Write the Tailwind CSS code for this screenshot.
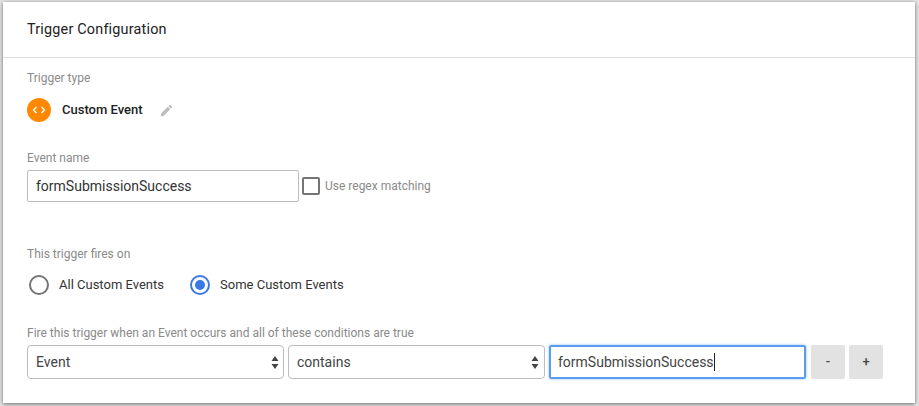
<!DOCTYPE html>
<html lang="en">
<head>
  <meta charset="UTF-8">
  <title>Trigger Configuration</title>
  <script src="https://cdn.jsdelivr.net/npm/@tailwindcss/browser@4"></script>
</head>
<body class="w-[919px] h-[406px] overflow-hidden bg-[#e4e4e4] font-['Roboto',sans-serif] text-[#212121]">
  <div class="ml-[3px] mt-[2px] w-[912px] h-[401px] bg-white shadow-[0_1px_4px_rgba(0,0,0,0.55)]">
    <header class="h-[56px] flex items-center pl-6 border-b border-[#dcdcdc] text-[14.4px] tracking-[0.2px]">Trigger Configuration</header>

    <div class="pl-6 pt-[13px]">
      <div class="text-[12px] leading-[14px] text-[#8a8a8a]">Trigger type</div>

      <!-- selected type -->
      <div class="flex items-center mt-[13px] h-6">
        <span class="w-6 h-6 rounded-full bg-[#ff8800] flex items-center justify-center">
          <svg width="14" height="10" viewBox="0 0 14 10" fill="none" stroke="white" stroke-width="1.4"><path d="M4.5 2 1.5 5l3 3M9.5 2l3 3-3 3"/></svg>
        </span>
        <span class="ml-[11px] text-[13px] font-medium">Custom Event</span>
        <svg class="ml-[16px]" width="15" height="15" viewBox="0 0 24 24" fill="#bdbdbd"><path d="M3 17.25V21h3.75L17.81 9.94l-3.75-3.75L3 17.25zM20.71 7.04a1 1 0 0 0 0-1.41l-2.34-2.34a1 1 0 0 0-1.41 0l-1.83 1.83 3.75 3.75 1.83-1.83z"/></svg>
      </div>

      <div class="text-[12px] leading-[14px] text-[#8a8a8a] mt-[29px]">Event name</div>
      <div class="flex items-center mt-[5px]">
        <div class="w-[272px] h-8 border border-[#bdbdbd] rounded-[2px] flex items-center pl-2 text-[14px] text-[#333]">formSubmissionSuccess</div>
        <span class="ml-[3px] w-[18px] h-[18px] border-2 border-[#757575] rounded-[2px]"></span>
        <span class="ml-[5px] text-[12px] text-[#8a8a8a]">Use regex matching</span>
      </div>

      <div class="text-[12px] leading-[14px] text-[#8a8a8a] mt-[45px]">This trigger fires on</div>

      <!-- radios -->
      <div class="flex items-center mt-[14px] h-5 text-[13px] text-[#333]">
        <span class="ml-[2px] w-5 h-5 rounded-full border-2 border-[#757575]"></span>
        <span class="ml-[10px]">All Custom Events</span>
        <span class="ml-[26px] w-5 h-5 rounded-full border-2 border-[#3b78e7] flex items-center justify-center"><span class="w-[10px] h-[10px] rounded-full bg-[#3b78e7]"></span></span>
        <span class="ml-[10px]">Some Custom Events</span>
      </div>

      <div class="text-[12px] leading-[14px] text-[#8a8a8a] mt-[31px]">Fire this trigger when an Event occurs and all of these conditions are true</div>

      <!-- condition row -->
      <div class="flex items-center mt-[5px] text-[14px] text-[#444]">
        <div class="w-[257px] h-[34px] border border-[#bdbdbd] rounded-[4px] flex items-center justify-between pl-2 pr-[4px]">
          <span>Event</span>
          <svg width="8" height="13" viewBox="0 0 8 13" fill="#444"><path d="M4 0 7.5 5H.5zM4 13 .5 8h7z"/></svg>
        </div>
        <div class="ml-1 w-[257px] h-[34px] border border-[#bdbdbd] rounded-[4px] flex items-center justify-between pl-2 pr-[5px]">
          <span>contains</span>
          <svg width="8" height="13" viewBox="0 0 8 13" fill="#444"><path d="M4 0 7.5 5H.5zM4 13 .5 8h7z"/></svg>
        </div>
        <div class="ml-1 w-[257px] h-[34px] border-2 border-[#5a9cf0] rounded-[2px] shadow-[0_0_3px_#8fc0fa] flex items-center pl-[7px]">
          <span>formSubmissionSuccess</span><span class="w-px h-[18px] bg-[#222]"></span>
        </div>
        <div class="ml-[5px] w-[34px] h-[34px] bg-[#e2e2e2] rounded-[2px] flex items-center justify-center text-[13px] font-medium">-</div>
        <div class="ml-1 w-[34px] h-[34px] bg-[#e2e2e2] rounded-[2px] flex items-center justify-center text-[13px] font-medium">+</div>
      </div>
    </div>
  </div>
</body>
</html>
